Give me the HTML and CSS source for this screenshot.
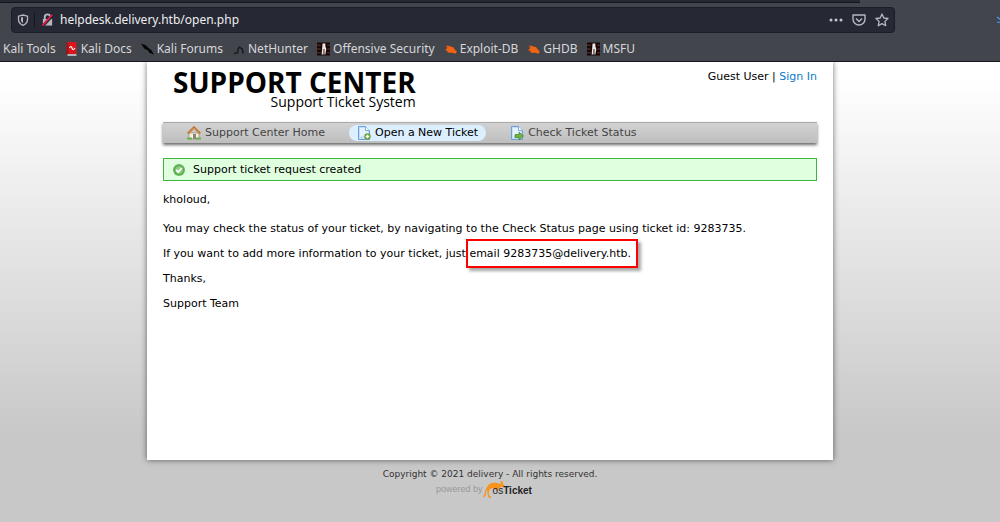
FILE: index.html
```html
<!DOCTYPE html>
<html lang="en">
<head>
<meta charset="utf-8">
<title>Support Center</title>
<link rel="stylesheet" href="styles.css">
</head>
<body>
<svg class="defs" aria-hidden="true">
  <symbol id="book" viewBox="0 0 12 14"><path d="M2 0h9v12H2z" fill="#d8161b"/><path d="M1 1h2v12H1z" fill="#a80f14"/><path d="M2 12h9v2H2z" fill="#aeb4ba"/><path d="M4 6c1-2 2-2 2.500 0s2 2 3 0" fill="none" stroke="#fff" stroke-width="1.200"/></symbol>
  <symbol id="strokes" viewBox="0 0 14 14"><path d="M0 1l5 2 3 3 3 2 3 5-5-2-2-3-3-1-3-4z" fill="#050505"/></symbol>
  <symbol id="hunter" viewBox="0 0 14 14"><path d="M2 12l4-1 .5-4 1.500-2 3 2 1 5" fill="none" stroke="#17191c" stroke-width="1.600"/></symbol>
  <symbol id="offsec" viewBox="0 0 14 14"><path d="M0 0h14v14H0z" fill="#180707"/><path d="M0 3h4M0 7h4M0 11h4M11 3h3M11 7h3M11 11h3" stroke="#4b2826" stroke-width="1.500"/><path d="M6 1h3v3l1 3-1 6H8V7H7v6H5l.5-6z" fill="#eee7e3"/></symbol>
  <symbol id="bug" viewBox="0 0 14 14"><path d="M3 3l3 1 4 1 2 3 2 2-2 2-3-1-4 0-2-2-2-1 2-1z" fill="#f36412"/><path d="M2 4l2 2M4 9l-1 2" stroke="#b94b16" stroke-width="1"/></symbol>
  <symbol id="page" viewBox="0 0 14 14"><path d="M1.500.5h7l4 4v9h-11z" fill="#c6def7" stroke="#6b9edb"/><path d="M3 2h5v3h3v3L3 11z" fill="#e5f1fd"/><path d="M8.500.5v4h4" fill="#fff" stroke="#78a8df"/></symbol>
</svg>
<header class="browser">
  <div class="tabstrip"></div>
  <div class="toolbar">
    <div class="addressbar">
      <svg class="shield" viewBox="0 0 12 14"><path d="M6 2l4.500 1.200v3.300C10.500 9.500 9 11 6 12.300 3 11 1.500 9.500 1.500 6.500V3.200z" fill="none" stroke="#b7b8bd" stroke-width="1.300"/><path d="M6 4l-2 .6v2.200C4 8.500 4.800 9.500 6 10z" fill="#b7b8bd"/></svg>
      <svg class="lock" viewBox="0 0 14 14"><path d="M2 6h10v7H2z" fill="#b7b8bd"/><path d="M4 7V4a3 3 0 0 1 6 0v3" fill="none" stroke="#b7b8bd" stroke-width="2"/><path d="M2 13.500L13 1.500" stroke="#262834" stroke-width="3"/><path d="M1.500 13L12 1.500" stroke="#e5174c" stroke-width="1.800"/></svg>
      <input class="url" type="text" aria-label="Address" value="helpdesk.delivery.htb/open.php">
      <div class="actions">
        <button type="button" aria-label="Page actions"><svg viewBox="0 0 14 14"><path d="M2 7h.01M7 7h.01M12 7h.01" stroke="#c4c5ca" stroke-width="3" stroke-linecap="round"/></svg></button>
        <button type="button" aria-label="Save to Pocket"><svg viewBox="0 0 14 14"><path d="M1 2h12v4a6 6 0 0 1-12 0z" fill="none" stroke="#b7b8bd" stroke-width="1.400" stroke-linejoin="round"/><path d="M4 5.500l3 3 3-3" fill="none" stroke="#b7b8bd" stroke-width="1.500"/></svg></button>
        <button type="button" aria-label="Bookmark"><svg viewBox="0 0 14 14"><path d="M7 1l1.800 4 4.200.5-3.100 2.900.8 4.300L7 10.600l-3.700 2.100.8-4.300L1 5.500 5.200 5z" fill="none" stroke="#b7b8bd" stroke-width="1.300" stroke-linejoin="round"/></svg></button>
      </div>
    </div>
    <svg class="download" viewBox="0 0 4 12"><path d="M0 2l4 3M0 9h4" stroke="#45a1ff" stroke-width="1.600"/></svg>
  </div>
  <nav class="bookmarks" aria-label="Bookmarks">
    <a href="#">Kali Tools</a>
    <a href="#"><svg><use href="#book"/></svg>Kali Docs</a>
    <a href="#"><svg><use href="#strokes"/></svg>Kali Forums</a>
    <a href="#"><svg><use href="#hunter"/></svg>NetHunter</a>
    <a href="#"><svg><use href="#offsec"/></svg>Offensive Security</a>
    <a href="#"><svg><use href="#bug"/></svg>Exploit-DB</a>
    <a href="#"><svg><use href="#bug"/></svg>GHDB</a>
    <a href="#"><svg><use href="#offsec"/></svg>MSFU</a>
  </nav>
</header>
<div class="site">
  <main class="container">
    <header class="masthead">
      <a class="brand" href="#"><strong>SUPPORT CENTER</strong><span>Support Ticket System</span></a>
      <p class="account">Guest User | <a href="#">Sign In</a></p>
    </header>
    <nav class="menu" aria-label="Support">
      <a href="#"><svg viewBox="0 0 14 14"><path d="M2 7h10v6H2z" fill="#f5efe0" stroke="#a28b68" stroke-width=".7"/><path d="M.8 7.500L7 1.500l6.200 6" fill="none" stroke="#b86b2e" stroke-width="2"/><path d="M1.500 7L7 2l5.500 5" fill="none" stroke="#e9a557" stroke-width=".8"/><path d="M6 8h3v5H6z" fill="#8d857c"/><path d="M0 12.500h5M9 12.500h5" stroke="#65b34e" stroke-width="2"/></svg>Support Center Home</a>
      <a class="active" href="#"><svg viewBox="0 0 14 14"><use href="#page"/><circle cx="10.500" cy="10.500" r="3.200" fill="#64a23b"/><path d="M10.500 8.700v3.600M8.700 10.500h3.600" stroke="#fff" stroke-width="1.400"/></svg>Open a New Ticket</a>
      <a href="#"><svg viewBox="0 0 14 14"><use href="#page"/><path d="M5 8.500h4V6l4.500 4L9 14v-2.500H5z" fill="#6fb43e" stroke="#488325" stroke-width=".7"/></svg>Check Ticket Status</a>
    </nav>
    <div class="notice" role="status"><svg viewBox="0 0 14 14"><circle cx="7" cy="7" r="6" fill="#68b85d"/><circle cx="7" cy="7" r="4.300" fill="#8fcd80" stroke="#4e9848" stroke-width=".7"/><path d="M4.300 7l2 2 3.500-4" fill="none" stroke="#fff" stroke-width="1.800"/></svg>Support ticket request created</div>
    <div class="message">
      <p class="greeting">kholoud,</p>
      <p>You may check the status of your ticket, by navigating to the Check Status page using ticket id: 9283735.</p>
      <p>If you want to add more information to your ticket, just <span class="marked">email 9283735@delivery.htb.</span></p>
      <p>Thanks,</p>
      <p>Support Team</p>
    </div>
  </main>
  <footer class="footer">
    <p>Copyright © 2021 delivery - All rights reserved.</p>
    <a class="powered" href="#"><span>powered by</span><svg viewBox="0 0 22 18"><path d="M4 8c1-5 6-6 10-5l3 1 1-1-1-3 2 2 1-1v3l2 2-1 1-3 0-3 2-1 2-2-2-3-1-3 2-2 1z" fill="#f7941d"/><path d="M0 16.500c3 0 2-3 3-6S5 6 8 5M6 8l-1 5 1 4h2" fill="none" stroke="#f7941d" stroke-width="1.300"/></svg><span class="wordmark">os<b>Ticket</b></span></a>
  </footer>
</div>
</body>
</html>
```
FILE: styles.css
```css
* { box-sizing: border-box; }
body { margin: 0; min-height: 100vh; display: flex; flex-direction: column; font: 11px/16px "DejaVu Sans", sans-serif; color: #000; }
p { margin: 0; }
a { color: inherit; text-decoration: none; }
svg { flex: none; }
.defs { position: absolute; width: 0; height: 0; }

.browser { background: #42454c; border-bottom: 1px solid #15161c; color: #d6d7da; font-family: "Noto Sans", sans-serif; font-size: 12px; }
.tabstrip { width: 86%; height: 3px; background: #262834; border-bottom: 1px solid #15161c; }
.toolbar { display: flex; justify-content: space-between; align-items: center; padding: 4px 0 4px 11px; }
.addressbar { flex: 0 1 884px; display: flex; align-items: center; height: 26px; padding: 0 5px; background: #262834; border: 1px solid #1b1c24; border-radius: 4px; }
.shield { width: 12px; height: 14px; }
.lock { width: 20px; height: 14px; margin-left: 5px; padding-left: 6px; border-left: 1px solid #15161c; }
.url { flex: 1; min-width: 0; margin-left: 6px; padding: 0; border: 0; outline: 0; background: none; color: #eeeef0; font: 12px/16px "Noto Sans", sans-serif; }
.actions { display: flex; gap: 9px; }
.actions button { display: flex; width: 14px; height: 14px; padding: 0; border: 0; background: none; }
.actions svg { width: 14px; height: 14px; }
.download { width: 3px; height: 12px; }
.bookmarks { display: flex; gap: 9px; height: 24px; align-items: center; padding: 0 3px; white-space: nowrap; }
.bookmarks a { display: flex; align-items: center; gap: 3px; }
.bookmarks svg { width: 13px; height: 14px; }

.site { flex: 1; padding-right: 20px; background: #c8c8c8 linear-gradient(#fff 16px, #c8c8c8 372px); }
.container { width: 70%; max-width: 840px; min-height: 398px; margin: 0 auto; padding: 0 16px 16px; background: #fff; box-shadow: 0 0 6px rgba(0,0,0,.55); clip-path: inset(0 -8px -8px); }
.masthead { display: flex; justify-content: space-between; padding: 7px 0 13px 10px; }
.brand { display: flex; flex-direction: column; align-items: flex-end; font-family: "Open Sans", sans-serif; }
.brand strong { font-size: 28px; line-height: 26px; }
.brand span { font-size: 14px; line-height: 14px; }
.account a { color: #0b7ac9; }
.menu { display: flex; align-items: center; gap: 16px; height: 21px; padding: 0 16px; background: linear-gradient(#d2d2d2, #bebebe); border-top: 1px solid #aaa; box-shadow: 0 2px 3px rgba(0,0,0,.6); color: #444; }
.menu a { display: flex; align-items: center; gap: 4px; padding: 0 8px; border-radius: 8px; }
.menu svg { width: 14px; height: 14px; }
.menu .active { background: #dbefff; color: #000; }
.notice { display: flex; align-items: center; gap: 7px; margin-top: 15px; height: 23px; padding: 0 8px; border: 1px solid #3db83d; background: #dfffdf; }
.notice svg { width: 14px; height: 14px; }
.message { display: flex; flex-direction: column; gap: 9px; padding-top: 11px; }
.greeting { padding-bottom: 4px; }
.marked { margin-left: -3px; padding: 6px 5px 6px 1px; border: 2px solid #f00; box-shadow: 3px 3px 3px rgba(0,0,0,.35); }

.footer { padding: 8px; display: flex; flex-direction: column; align-items: center; color: #333; font-size: 9px; line-height: 12px; }
.powered { display: flex; align-items: center; padding-right: 12px; color: #999; font: 9px/12px "Liberation Sans", sans-serif; }
.powered svg { width: 22px; height: 18px; }
.wordmark { margin: 3px 0 0 -12px; color: #222; font-size: 10px; }
```
